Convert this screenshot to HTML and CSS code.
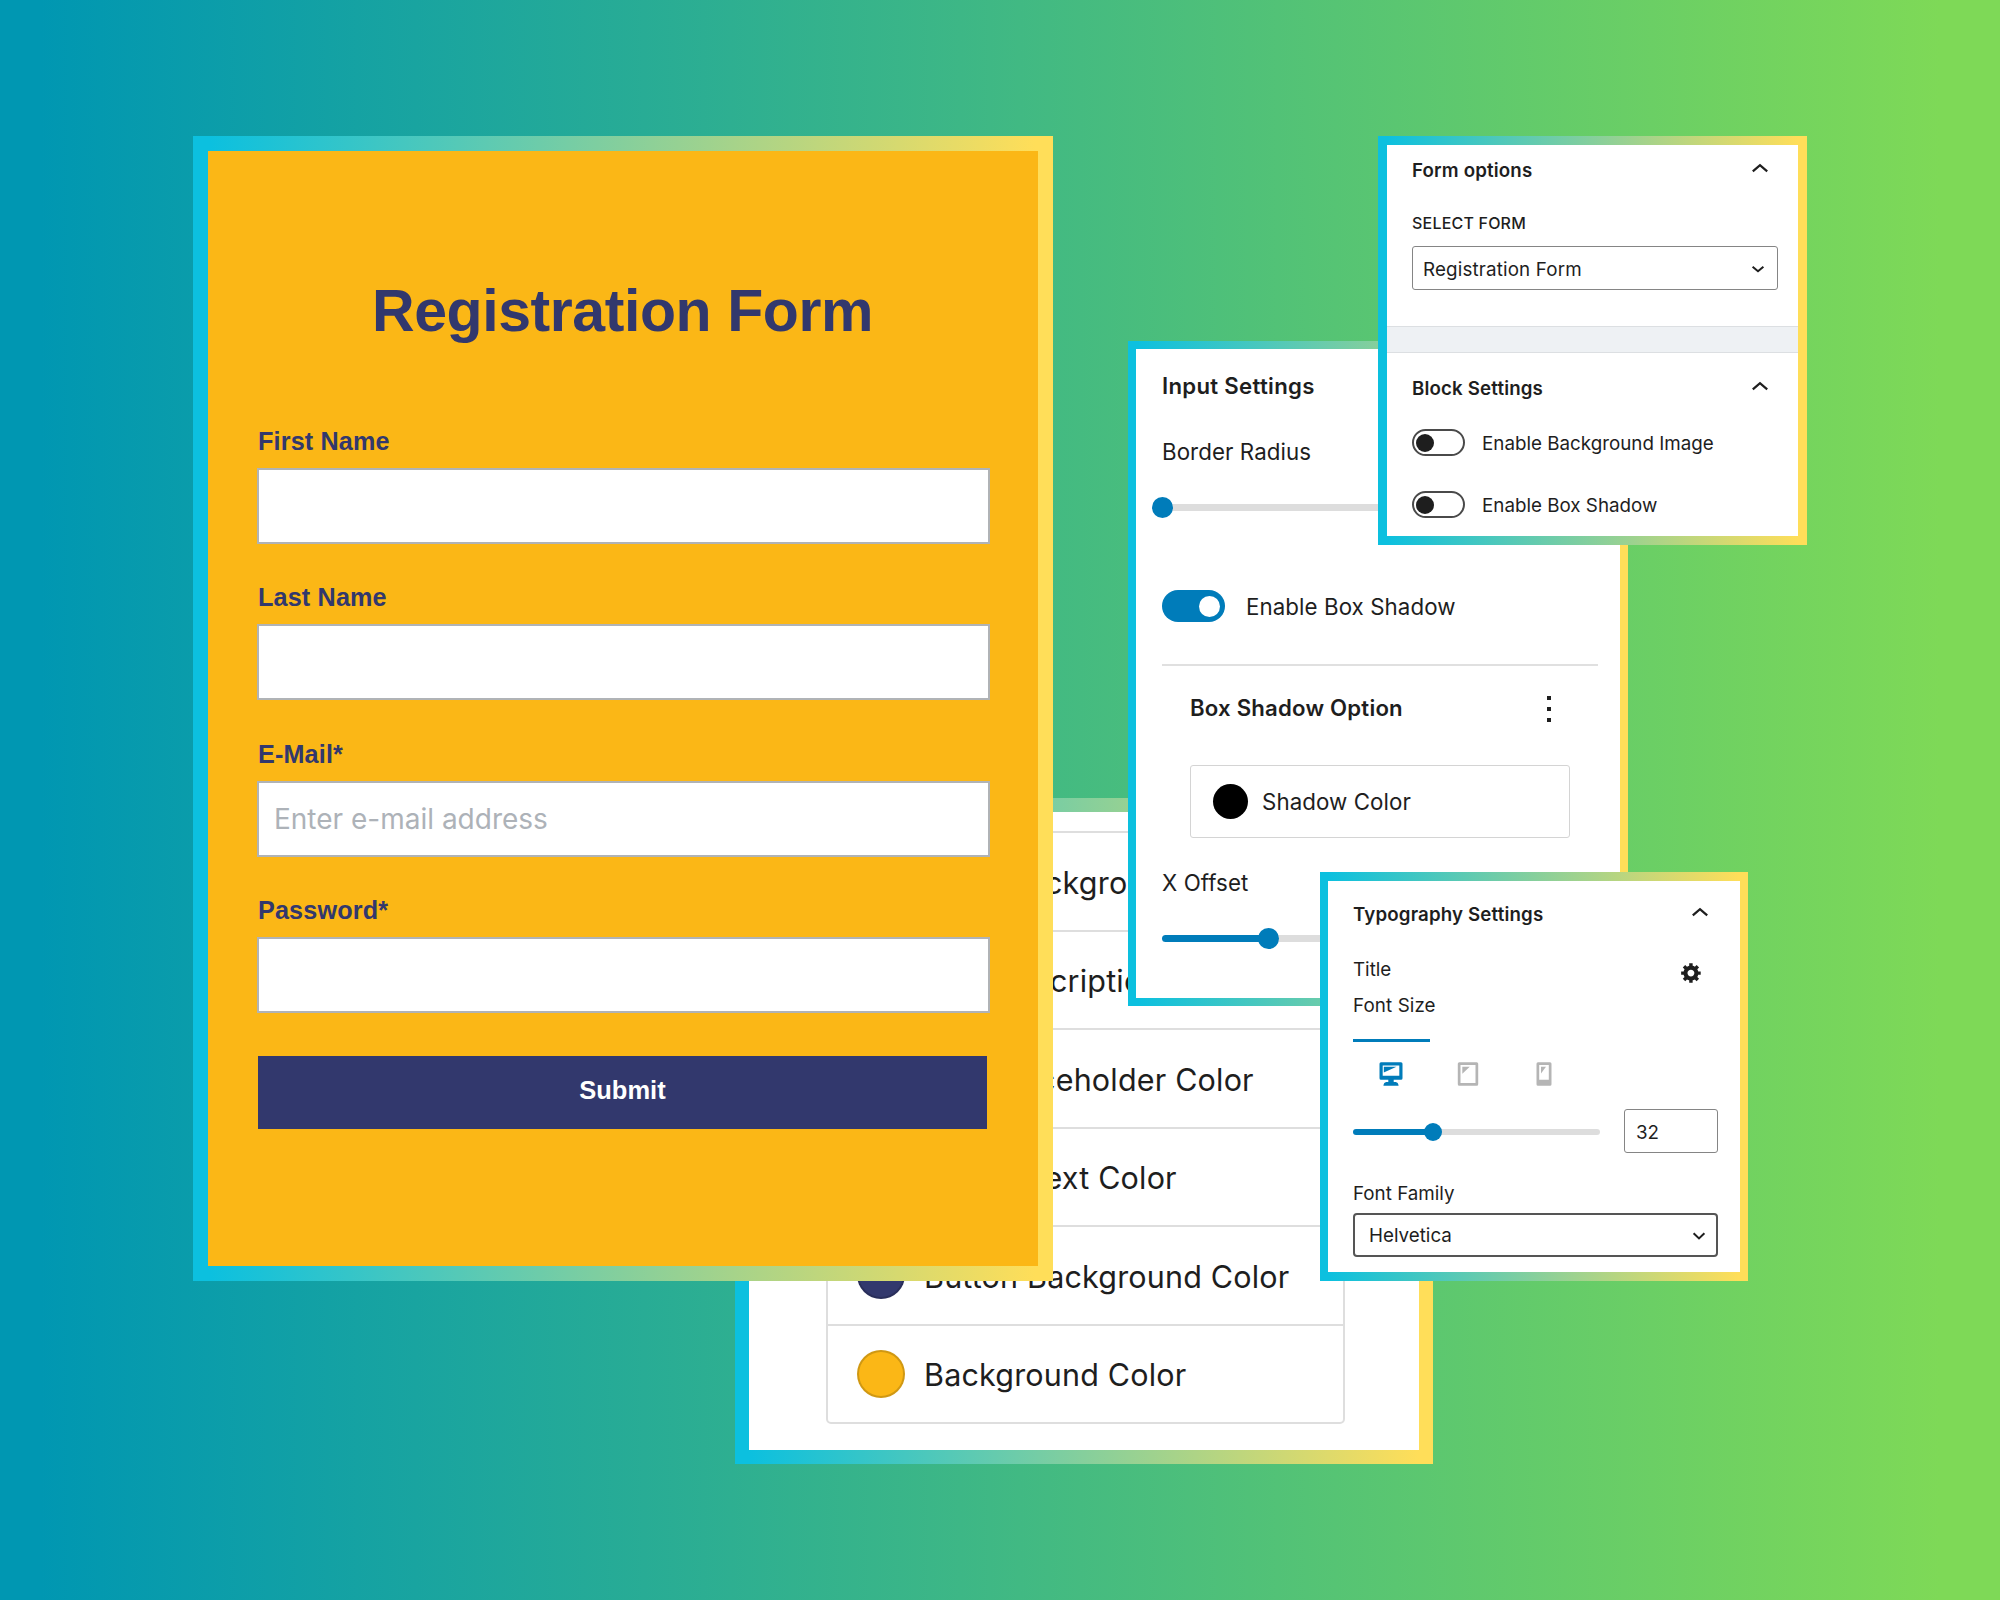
FILE: index.html
```html
<!DOCTYPE html>
<html lang="en">
<head>
<meta charset="utf-8">
<title>Registration Form block</title>
<link rel="stylesheet" href="styles.css">
</head>
<body>
<main class="canvas">

  <section class="frame frame-colors">
    <div class="panel">
      <ul class="color-list">
        <li><span class="swatch white"></span><span class="push-1">Input Background Color</span></li>
        <li><span class="swatch gray"></span><span class="pull-2">Input Description Color</span></li>
        <li><span class="swatch gray"></span><span class="pull-2">Input Placeholder Color</span></li>
        <li><span class="swatch white"></span><span>Button Text Color</span></li>
        <li><span class="swatch navy"></span><span>Button Background Color</span></li>
        <li><span class="swatch amber"></span><span>Background Color</span></li>
      </ul>
    </div>
  </section>

  <section class="frame frame-form">
    <form class="panel form">
      <h1>Registration Form</h1>
      <div class="fields">
        <div class="field"><label>First Name</label><div class="control"></div></div>
        <div class="field"><label>Last Name</label><div class="control"></div></div>
        <div class="field"><label>E-Mail*</label><div class="control"><span class="placeholder">Enter e-mail address</span></div></div>
        <div class="field"><label>Password*</label><div class="control"></div></div>
      </div>
      <button class="submit" type="button">Submit</button>
    </form>
  </section>

  <section class="frame frame-input">
    <div class="panel input-panel">
      <h2>Input Settings</h2>
      <p class="row-label radius-label">Border Radius</p>
      <div class="slider"><span class="track"></span><span class="thumb"></span></div>
      <div class="toggle-row"><span class="toggle"></span><span>Enable Box Shadow</span></div>
      <hr>
      <div class="shadow-option">
        <div class="shadow-head"><h3>Box Shadow Option</h3><span class="dots"><i></i><i></i><i></i></span></div>
        <div class="color-button"><span class="dot-black"></span><span>Shadow Color</span></div>
      </div>
      <p class="row-label offset-label">X Offset</p>
      <div class="slider"><span class="track fill-24"></span><span class="thumb at-24"></span></div>
    </div>
  </section>

  <section class="frame frame-options">
    <div class="panel options-panel">
      <div class="options-section">
        <div class="head"><h2>Form options</h2><svg class="chev" viewBox="0 0 20 12"><path d="M2.8 9.3 10 3.2l7.2 6.1"/></svg></div>
        <p class="caps">SELECT FORM</p>
        <div class="select"><span>Registration Form</span><svg class="chev-down" viewBox="0 0 16 10"><path d="M2.6 2.8 8 7.2l5.4-4.4"/></svg></div>
      </div>
      <div class="band"></div>
      <div class="options-section">
        <div class="head block-head"><h2>Block Settings</h2><svg class="chev" viewBox="0 0 20 12"><path d="M2.8 9.3 10 3.2l7.2 6.1"/></svg></div>
        <div class="small-row"><span class="toggle-off"></span><span class="small-label">Enable Background Image</span></div>
        <div class="small-row"><span class="toggle-off"></span><span class="small-label">Enable Box Shadow</span></div>
      </div>
    </div>
  </section>

  <section class="frame frame-typo">
    <div class="panel typo-panel">
      <div class="head"><h2>Typography Settings</h2><svg class="chev" viewBox="0 0 20 12"><path d="M2.8 9.3 10 3.2l7.2 6.1"/></svg></div>
      <div class="title-row"><span>Title</span>
        <svg class="gear" viewBox="0 0 20 20"><path fill-rule="evenodd" d="M18 12h-2.18c-.17.7-.44 1.35-.81 1.93l1.54 1.54-2.1 2.1-1.54-1.54c-.58.36-1.23.63-1.91.79V19H8v-2.18c-.68-.16-1.33-.43-1.91-.79l-1.54 1.54-2.12-2.12 1.54-1.54c-.36-.58-.63-1.23-.79-1.91H1V9.03h2.17c.16-.7.44-1.35.8-1.94L2.43 5.55l2.1-2.1 1.54 1.54c.58-.37 1.24-.64 1.93-.81V2h3v2.18c.68.16 1.33.43 1.91.79l1.54-1.54 2.12 2.12-1.54 1.54c.36.59.64 1.24.8 1.94H18V12zm-8.5 1.5c1.66 0 3-1.34 3-3s-1.34-3-3-3-3 1.34-3 3 1.34 3 3 3z"/></svg>
      </div>
      <p class="font-size">Font Size</p>
      <div class="tab-line"></div>
      <div class="tabs">
        <span class="tab active"><svg width="24" height="24" viewBox="0 0 24 24"><path fill-rule="evenodd" d="M2 .3h20q1.5 0 1.5 1.5v14.4q0 1.5-1.5 1.5h-7.3v2.4h2.1q2.4.4 2.8 3.6H4.4q.4-3.2 2.8-3.6h2.1v-2.4H2q-1.5 0-1.5-1.5V1.8Q.5.3 2 .3zM3.7 3.4v10.4h16.6V3.4z"/><path d="M4.8 4.8h12.7L4.8 10.5z"/></svg></span>
        <span class="tab"><svg width="24" height="24" viewBox="0 0 24 24"><path fill-rule="evenodd" d="M3.3.3h17.4q1.5 0 1.5 1.5v20.4q0 1.5-1.5 1.5H3.3q-1.5 0-1.5-1.5V1.8Q1.8.3 3.3.3zM4.5 3v18h15V3z"/><path d="M6.3 4.800h7.500l-7.500 7z"/></svg></span>
        <span class="tab"><svg width="24" height="24" viewBox="0 0 24 24"><path fill-rule="evenodd" d="M6 .3h12q1.5 0 1.5 1.5v20.4q0 1.5-1.5 1.5H6q-1.5 0-1.5-1.5V1.8Q4.5.3 6 .3zM7.2 3v14.8h9.6V3z"/><path d="M9 4.8h5L9 11.5z"/></svg></span>
      </div>
      <div class="size-row">
        <div class="slider small"><span class="track fill-32"></span><span class="thumb at-32"></span></div>
        <div class="number">32</div>
      </div>
      <p class="font-family">Font Family</p>
      <div class="select dark"><span>Helvetica</span><svg class="chev-down" viewBox="0 0 16 10"><path d="M2.6 2.2 8 7.4l5.4-5.2"/></svg></div>
    </div>
  </section>

</main>
</body>
</html>
```
FILE: styles.css
```css
* { box-sizing: border-box; margin: 0; padding: 0; }

body { width: 2000px; height: 1600px; overflow: hidden; }

.canvas {
  position: relative;
  width: 2000px;
  height: 1600px;
  background: linear-gradient(90deg, #0097b2 2%, #7ed957 97%);
  font-family: Inter, sans-serif;
  color: #1e1e1e;
}

/* Overlapping windows on the canvas */
.frame {
  position: absolute;
  background: linear-gradient(90deg, #0cc0df 2%, #ffde59 98%);
}
.frame-colors { left: 735px; top: 798px; width: 698px; height: 666px; padding: 14px; }
.frame-form { left: 193px; top: 136px; width: 860px; height: 1145px; padding: 15px; }
.frame-input { left: 1128px; top: 341px; width: 500px; height: 665px; padding: 8px; }
.frame-options { left: 1378px; top: 136px; width: 429px; height: 409px; padding: 9px; }
.frame-typo { left: 1320px; top: 872px; width: 428px; height: 409px; padding: 9px 8px; }

.panel { height: 100%; overflow: hidden; background: #fff; }

/* Color list */
.color-list {
  list-style: none;
  width: 519px;
  margin: 19px 0 0 77px;
  border: 2px solid #dedede;
  border-radius: 5px;
  font-size: 30.5px;
  letter-spacing: .18px;
}
.color-list li {
  display: flex;
  align-items: center;
  gap: 19px;
  height: 98.5px;
  padding-left: 29px;
  white-space: nowrap;
}
.color-list li:first-child { height: 96.5px; }
.color-list li + li { border-top: 2px solid #dedede; }
.color-list li span:last-child { padding-top: 2px; }
.push-1 { margin-left: 1px; }
.pull-2 { margin-left: -13px; }
.swatch { width: 48px; height: 48px; border-radius: 50%; border: 2px solid rgba(0, 0, 0, .17); }
.white { background-color: #fff; }
.gray { background-color: #abb3bd; }
.navy { background-color: #32386d; }
.amber { background-color: #fbb716; }

/* Registration form */
.form {
  display: flex;
  flex-direction: column;
  padding: 130px 49px 0;
  background: #fbb716;
  color: #32386d;
  font-family: "Liberation Sans", Arial, sans-serif;
}
.form h1 { font-size: 59px; line-height: 60px; text-align: center; letter-spacing: -.42px; margin-right: 1px; }
.fields { display: flex; flex-direction: column; gap: 38.3px; margin-top: 85px; }
.field label { display: block; font-size: 25.2px; line-height: 30px; font-weight: 700; letter-spacing: .15px; margin-left: 1px; }
.control {
  display: flex;
  align-items: center;
  width: 733px;
  height: 76px;
  margin-top: 12px;
  padding-left: 15px;
  border: 2px solid #b0b3b6;
  background: #fff;
}
.placeholder { font: 400 28px Inter, sans-serif; color: #adb2b8; }
.submit {
  width: 729px;
  height: 73px;
  margin: 43px 0 0 1px;
  padding-bottom: 3px;
  border: 0;
  background: #32386d;
  color: #fff;
  font: 700 25.5px "Liberation Sans", Arial, sans-serif;
}

h2, h3 { font-weight: 600; }

/* Input settings */
.input-panel { padding-left: 26px; font-size: 22.3px; letter-spacing: .08px; }
.input-panel h2 { font-size: 22.2px; line-height: 74px; letter-spacing: .3px; }
.row-label { line-height: 30px; }
.radius-label { margin-top: 14px; }
.offset-label { margin-top: 30px; }
.slider { position: relative; display: flex; align-items: center; width: 436px; height: 21px; margin-top: 30px; }
.track { width: 100%; height: 7px; border-radius: 4px; background: #ddd; }
.thumb { position: absolute; left: -10px; width: 21px; height: 21px; border-radius: 50%; background: #007cba; }
.fill-24 { background: linear-gradient(90deg, #007cba 24%, #ddd 24%); }
.at-24 { left: 96px; }
.toggle-row { display: flex; align-items: center; gap: 21px; height: 32px; margin-top: 72px; }
.toggle { display: flex; align-items: center; justify-content: flex-end; width: 63px; height: 32px; padding-right: 5px; border-radius: 16px; background: #007cba; }
.toggle::after { content: ""; width: 21px; height: 21px; border-radius: 50%; background: #fff; }
.input-panel hr { width: 436px; height: 2px; margin-top: 42px; border: 0; background: #e0e0e0; }
.shadow-option { width: 408px; padding-left: 28px; margin-top: 28px; }
.shadow-head { display: flex; justify-content: space-between; align-items: center; height: 30px; padding-right: 19px; }
.shadow-head h3 { font-size: 22.2px; line-height: 28px; padding-bottom: 2px; letter-spacing: .2px; }
.dots { display: flex; flex-direction: column; gap: 7px; }
.dots i { width: 4px; height: 4px; background: #1e1e1e; }
.color-button { display: flex; align-items: center; gap: 14px; height: 73px; margin-top: 41px; padding-left: 22px; border: 1px solid #d4d4d4; border-radius: 3px; }
.dot-black { width: 35px; height: 35px; border-radius: 50%; background: #000; }

/* Form options */
.options-panel, .typo-panel { font-size: 18.8px; }
.options-section { padding: 0 20px 0 25px; }
.head { display: flex; justify-content: space-between; align-items: center; height: 51px; padding-right: 8px; }
.head h2 { font-size: 18.7px; letter-spacing: .15px; }
.chev { width: 20px; height: 12px; margin-top: -5px; fill: none; stroke: #1e1e1e; stroke-width: 2.3; }
.caps { margin-top: 17px; font-size: 16px; line-height: 20px; font-weight: 500; letter-spacing: .2px; }
.select { display: flex; align-items: center; justify-content: space-between; height: 44px; margin-top: 13px; padding: 2px 11px 0 10px; border: 1px solid #858585; border-radius: 3px; letter-spacing: .15px; }
.chev-down { width: 16px; height: 10px; fill: none; stroke: #1e1e1e; stroke-width: 2; }
.band { height: 27px; margin-top: 36px; border: solid #dcdfe2; border-width: 1px 0; background: #eef1f4; }
.block-head { height: 70px; }
.small-row { display: flex; align-items: center; gap: 17px; height: 27px; margin-top: 6px; }
.small-row + .small-row { margin-top: 35px; }
.small-label { padding-top: 1px; }
.toggle-off { display: flex; align-items: center; width: 53px; height: 27px; padding-left: 2px; border: 2px solid #4a4a4a; border-radius: 14px; }
.toggle-off::before { content: ""; width: 18px; height: 18px; border-radius: 50%; background: #1e1e1e; }

/* Typography settings */
.typo-panel { padding: 0 22px 0 25px; }
.typo-panel .head { height: 66px; }
.title-row { display: flex; justify-content: space-between; height: 24px; line-height: 24px; margin-top: 11px; padding-right: 15px; }
.gear { width: 23px; height: 23px; margin-top: 3px; fill: #1e1e1e; }
.font-size { margin-top: 12px; line-height: 24px; letter-spacing: .1px; }
.tab-line { width: 77px; height: 3px; margin-top: 21px; background: #007cba; }
.tabs { display: flex; margin-top: 20px; }
.tab { display: flex; justify-content: center; width: 76.5px; height: 24px; fill: #b5b5b5; }
.tab.active { fill: #007cba; }
.size-row { display: flex; align-items: center; justify-content: space-between; height: 44px; margin-top: 23px; }
.slider.small { width: 247px; height: 18px; margin: 1px 0 0; }
.small .track { height: 6px; }
.fill-32 { background: linear-gradient(90deg, #007cba 32%, #ddd 32%); }
.small .thumb { left: 71px; width: 18px; height: 18px; }
.number { width: 94px; height: 44px; padding-left: 11px; line-height: 45px; border: 1px solid #858585; border-radius: 3px; }
.font-family { margin-top: 29px; line-height: 24px; }
.select.dark { margin-top: 7px; padding: 1px 9px 0 14px; border: 2px solid #555; border-radius: 4px; letter-spacing: 0; }
```
